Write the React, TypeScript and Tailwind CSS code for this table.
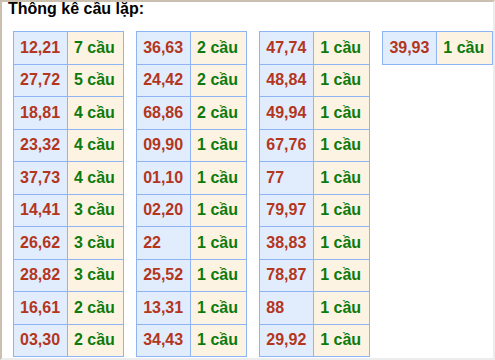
const groups: [string, number][][] = [
  [
    ["12,21", 7],
    ["27,72", 5],
    ["18,81", 4],
    ["23,32", 4],
    ["37,73", 4],
    ["14,41", 3],
    ["26,62", 3],
    ["28,82", 3],
    ["16,61", 2],
    ["03,30", 2],
  ],
  [
    ["36,63", 2],
    ["24,42", 2],
    ["68,86", 2],
    ["09,90", 1],
    ["01,10", 1],
    ["02,20", 1],
    ["22", 1],
    ["25,52", 1],
    ["13,31", 1],
    ["34,43", 1],
  ],
  [
    ["47,74", 1],
    ["48,84", 1],
    ["49,94", 1],
    ["67,76", 1],
    ["77", 1],
    ["79,97", 1],
    ["38,83", 1],
    ["78,87", 1],
    ["88", 1],
    ["29,92", 1],
  ],
  [["39,93", 1]],
];

function Group({ rows }: { rows: [string, number][] }) {
  return (
    <table className="border-collapse self-start">
      <tbody>
        {rows.map(([pair, n]) => (
          <tr key={pair} className="h-[32.5px]">
            <td className="w-[54px] border border-[#8fb4f4] bg-[#e1edfd] pl-[6px] text-[#b3361d]">
              {pair}
            </td>
            <td className="w-[56px] border border-[#8fb4f4] bg-[#fdf3e3] pl-[6px] text-[#0d7a0d]">
              {n} cầu
            </td>
          </tr>
        ))}
      </tbody>
    </table>
  );
}

export default function App() {
  return (
    <div className="w-[495px] h-[360px] overflow-hidden bg-white border-l-2 border-t-2 border-l-[#cbbfb0] border-t-[#cbbfb0] border-r-2 border-b-2 border-r-[#ececec] border-b-[#ececec] font-['Liberation_Sans',Arial,sans-serif] font-bold text-[16px]">
      <h1 className="pl-[6px] leading-[14px] text-black text-[16px]">Thông kê cầu lặp:</h1>
      <div className="flex gap-[12.5px] pl-[11px] mt-[15px]">
        {groups.map((rows, i) => (
          <Group key={i} rows={rows} />
        ))}
      </div>
    </div>
  );
}
